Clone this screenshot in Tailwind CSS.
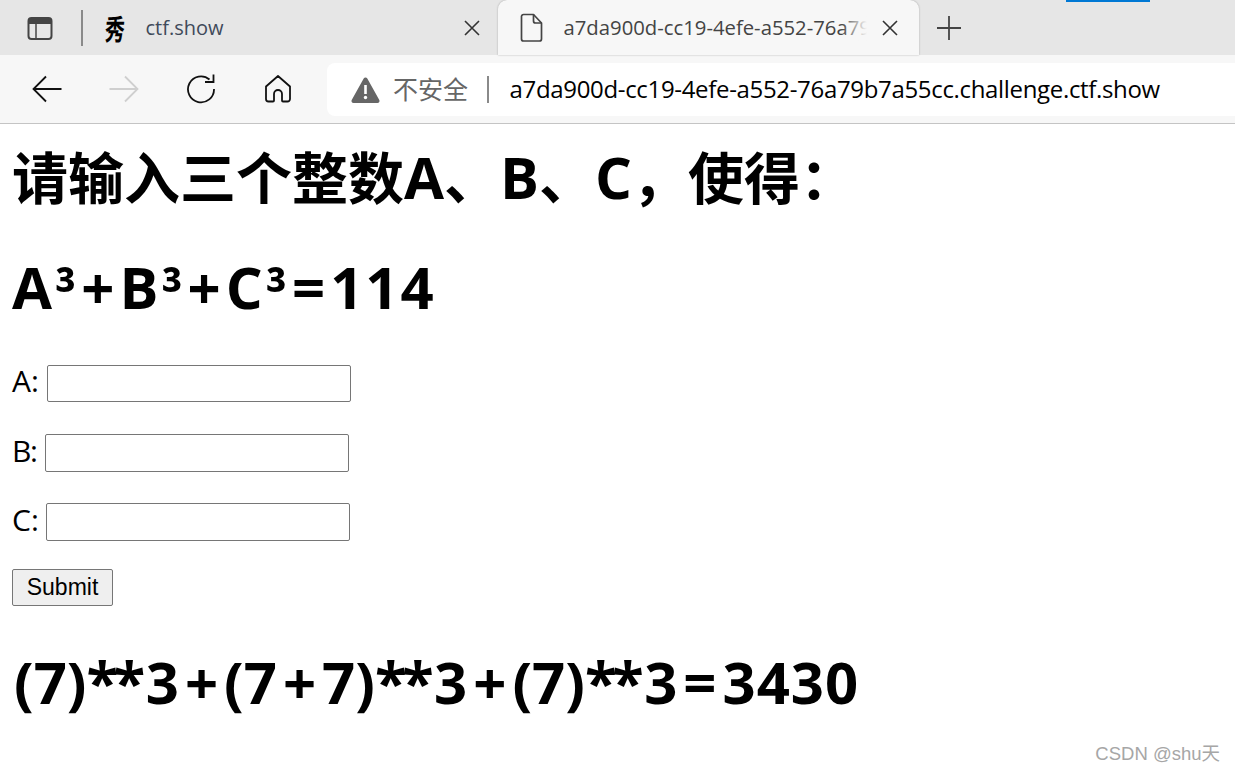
<!DOCTYPE html>
<html lang="zh">
<head>
  <meta charset="UTF-8" />
  <title>ctf.show</title>
  <script src="https://cdn.jsdelivr.net/npm/@tailwindcss/browser@4"></script>
</head>
<body class="relative h-[773px] w-[1235px] overflow-hidden bg-white font-['Open_Sans','Noto_Sans_CJK_SC',sans-serif] text-black">
  <!-- Tab strip -->
  <div class="relative flex h-[55px] bg-[#e6e6e6]">
    <div class="absolute left-[1066px] top-0 h-[2px] w-[84px] bg-[#0078d4]"></div>
    <div class="flex w-[81px] items-center">
      <svg class="ml-[27px]" width="26" height="26" viewBox="0 0 26 26" fill="none">
        <rect x="1.5" y="3" width="23" height="21" rx="3" stroke="#444" stroke-width="2"/>
        <path d="M1.5 6a3 3 0 0 1 3-3h17a3 3 0 0 1 3 3v3h-23z" fill="#444"/>
        <path d="M9 9v15" stroke="#444" stroke-width="1.5"/>
      </svg>
    </div>
    <div class="h-[36px] w-[1.5px] self-center bg-[#8a8a8a]"></div>
    <div class="flex w-[415px] items-center">
      <span class="ml-[21px] w-[21px] scale-x-90 scale-y-[1.3] -skew-x-6 text-[22px] leading-none font-bold">秀</span>
      <span class="ml-[21px] w-[309px] text-[20px] text-[#3f4a5a]">ctf.show</span>
      <svg class="ml-[9px]" width="16" height="16" viewBox="0 0 16 16" fill="none" stroke="#333" stroke-width="1.6"><path d="M1 1l14 14M15 1L1 15"/></svg>
    </div>
    <div class="flex h-[55px] w-[421px] items-center rounded-t-[9px] bg-[#f7f7f7] shadow-[0_0_2px_rgba(0,0,0,0.3)]">
      <svg class="ml-[22px]" width="24" height="30" viewBox="0 0 24 30" fill="none" stroke="#444" stroke-width="1.7" stroke-linejoin="round">
        <path d="M3.5 1.5h10l8 8.5v16a2 2 0 0 1-2 2h-16a2 2 0 0 1-2-2v-22.500a2 2 0 0 1 2-2z"/>
        <path d="M13.500 1.500v6.500a2 2 0 0 0 2 2h6"/>
      </svg>
      <span class="relative ml-[20px] w-[303px] overflow-hidden text-[20.3px] whitespace-nowrap text-[#444]">a7da900d-cc19-4efe-a552-76a79b7a55cc<span class="absolute top-0 right-0 h-full w-[26px] bg-gradient-to-r from-[#f7f7f7]/0 to-[#f7f7f7]"></span></span>
      <svg class="ml-[15px]" width="16" height="16" viewBox="0 0 16 16" fill="none" stroke="#333" stroke-width="1.6"><path d="M1 1l14 14M15 1L1 15"/></svg>
    </div>
    <svg class="ml-[17px] self-center" width="26" height="26" viewBox="0 0 26 26" fill="none" stroke="#444" stroke-width="1.8"><path d="M13 1v24M1 13h24"/></svg>
  </div>

  <!-- Toolbar -->
  <div class="flex h-[69px] items-start border-b border-[#c4c4c4] bg-[#f7f7f7]">
    <div class="flex h-[68px] w-[327px] items-center">
      <svg class="ml-[32px]" width="30" height="28" viewBox="0 0 30 28" fill="none" stroke="#111" stroke-width="1.8"><path d="M1.500 14h28M14 1.500L1.500 14 14 26.500"/></svg>
      <svg class="ml-[47px]" width="30" height="28" viewBox="0 0 30 28" fill="none" stroke="#cfcfcf" stroke-width="1.8"><path d="M0.500 14h28M16 1.500L28.500 14 16 26.500"/></svg>
      <svg class="ml-[47px]" width="30" height="30" viewBox="0 0 30 30" fill="none" stroke="#111" stroke-width="1.8"><path d="M23.500 5.500A13 13 0 1 0 28 15"/><path d="M16 7h8.500V-0.500" transform="translate(3 1)"/></svg>
      <svg class="ml-[48px]" width="28" height="30" viewBox="0 0 28 30" fill="none" stroke="#111" stroke-width="1.800" stroke-linejoin="round"><path d="M14 2L2 12.500V25a2.500 2.500 0 0 0 2.500 2.500H9a1 1 0 0 0 1-1V20a4 4 0 0 1 8 0v6.500a1 1 0 0 0 1 1h4.500A2.500 2.500 0 0 0 26 25V12.500z"/></svg>
    </div>
    <div class="mt-[8px] flex h-[53px] flex-1 items-center rounded-l-[8px] bg-white">
      <svg class="ml-[24px]" width="29" height="26" viewBox="0 0 29 26"><path d="M14.500 0.500c0.800 0 1.400 0.400 1.800 1.100l12 21.500c0.700 1.300-0.200 2.900-1.800 2.900H2.500c-1.600 0-2.500-1.600-1.800-2.900l12-21.500c0.400-0.700 1-1.100 1.800-1.100z" fill="#666"/><path d="M14.500 8v9" stroke="#fff" stroke-width="2.600"/><circle cx="14.500" cy="20.500" r="1.700" fill="#fff"/></svg>
      <span class="ml-[13px] text-[25px] leading-none text-[#666]">不安全</span>
      <div class="ml-[19px] h-[27px] w-[1.5px] bg-[#8a8a8a]"></div>
      <span class="ml-[21px] pb-[2px] text-[24px] tracking-[-0.33px] whitespace-nowrap text-black">a7da900d-cc19-4efe-a552-76a79b7a55cc.challenge.ctf.show</span>
    </div>
  </div>

  <!-- Page -->
  <main class="pl-[12px]">
    <h1 class="mt-[16px] text-[56px] leading-[74px] font-bold">请输入三个整数<span class="text-[58px]">A</span>、<span class="text-[58px]">B</span>、<span class="text-[58px]">C</span>，使得：</h1>
    <h1 class="mt-[36px] text-[58px] leading-[74px] font-bold whitespace-nowrap">A<span class="relative top-[6px] ml-[3px] text-[56px]">³</span><span class="mx-[5px]">+</span>B<span class="relative top-[6px] ml-[3px] text-[56px]">³</span><span class="mx-[5px]">+</span>C<span class="relative top-[6px] ml-[3px] text-[56px]">³</span><span class="mx-[5px]">=</span><span class="tracking-[2px]">114</span></h1>

    <form class="mt-[40px] text-[30px]">
      <div class="flex h-[38px] items-center gap-[8px]">
        <label class="w-[27px] pb-[6px]">A:</label>
        <input type="text" class="h-[37px] w-[304px] rounded-[2px] border-[1.5px] border-[#767676] bg-white" />
      </div>
      <div class="mt-[32px] flex h-[38px] items-center gap-[8px]">
        <label class="w-[25px] pb-[6px] tracking-[-1.5px]">B:</label>
        <input type="text" class="h-[38px] w-[304px] rounded-[2px] border-[1.5px] border-[#767676] bg-white" />
      </div>
      <div class="mt-[31px] flex h-[38px] items-center gap-[8px]">
        <label class="w-[26px] pb-[6px]">C:</label>
        <input type="text" class="h-[38px] w-[304px] rounded-[2px] border-[1.5px] border-[#767676] bg-white" />
      </div>
      <button type="button" class="mt-[28px] block h-[37px] w-[101px] rounded-[2px] border-[1.5px] border-[#767676] bg-[#efefef] font-['Liberation_Sans',sans-serif] text-[23px] leading-none">Submit</button>
    </form>

    <h1 class="mt-[39px] ml-[2px] text-[58px] leading-[74px] font-bold whitespace-nowrap">(7)<span class="tracking-[-4.5px]">**</span><span class="ml-[5px]">3</span><span class="mx-[6px]">+</span>(7<span class="mx-[6px]">+</span>7)<span class="tracking-[-4.5px]">**</span><span class="ml-[5px]">3</span><span class="mx-[6px]">+</span>(7)<span class="tracking-[-4.5px]">**</span><span class="ml-[5px]">3</span><span class="mx-[6px]">=</span><span class="tracking-[1px]">3430</span></h1>
  </main>

  <span class="absolute top-[743px] right-[15px] font-['Liberation_Sans','Noto_Sans_CJK_SC',sans-serif] text-[18.5px] leading-[22px] text-[#a6a6a6]">CSDN @shu天</span>
</body>
</html>
